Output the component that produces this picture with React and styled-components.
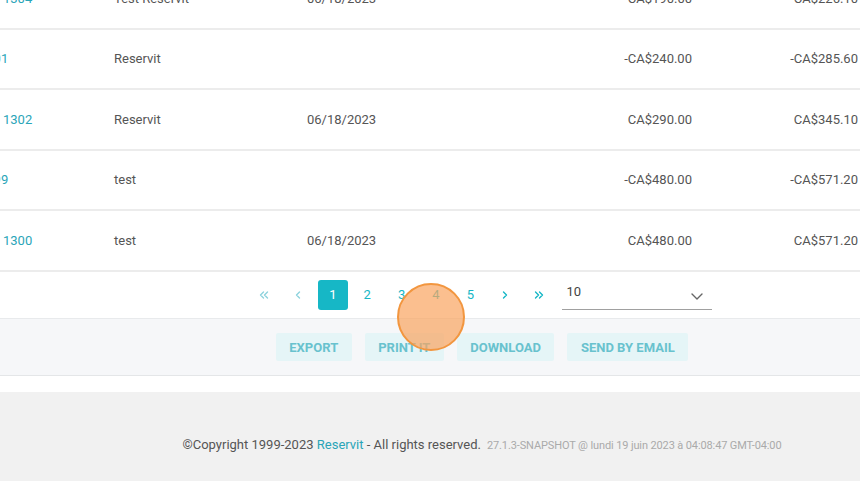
import React from "react";
import styled, { createGlobalStyle } from "styled-components";

const colors = {
  text: "#555555",
  link: "#2aa5b8",
  primary: "#16b7c6",
  border: "#ececec",
  barBg: "#f6f7f9",
  footerBg: "#f1f1f1",
};

const GlobalStyle = createGlobalStyle`
  html, body {
    margin: 0;
    padding: 0;
    overflow: hidden;
    background: #ffffff;
  }
  body {
    font-family: Roboto, "Liberation Sans", Arial, sans-serif;
    color: ${colors.text};
  }
`;

const rows = [
  { id: "1304", name: "Test Reservit", date: "06/18/2023", ht: "CA$190.00", ttc: "CA$226.10" },
  { id: "1301", name: "Reservit", date: "", ht: "-CA$240.00", ttc: "-CA$285.60", credit: true },
  { id: "1302", name: "Reservit", date: "06/18/2023", ht: "CA$290.00", ttc: "CA$345.10" },
  { id: "1299", name: "test", date: "", ht: "-CA$480.00", ttc: "-CA$571.20", credit: true },
  { id: "1300", name: "test", date: "06/18/2023", ht: "CA$480.00", ttc: "CA$571.20" },
];

const pages = [1, 2, 3, 4, 5];

const Chevron = ({ double, left }) => (
  <svg width="12" height="12" viewBox="0 0 12 12" fill="none" stroke="currentColor" strokeWidth="1.4" strokeLinecap="round" strokeLinejoin="round">
    {left ? (
      double ? (
        <>
          <path d="M5.5 3 L2.5 6 L5.5 9" />
          <path d="M9.5 3 L6.5 6 L9.5 9" />
        </>
      ) : (
        <path d="M7.5 3 L4.5 6 L7.5 9" />
      )
    ) : double ? (
      <>
        <path d="M2.5 3 L5.5 6 L2.5 9" />
        <path d="M6.5 3 L9.5 6 L6.5 9" />
      </>
    ) : (
      <path d="M4.5 3 L7.5 6 L4.5 9" />
    )}
  </svg>
);

export default function App() {
  return (
    <>
      <GlobalStyle />
      <Screen>
        <Page>
          <Table>
            {rows.map((r) => (
              <Row key={r.id}>
                <Cell />
                <Cell>
                  <IdLink $credit={r.credit}>{r.id}</IdLink>
                </Cell>
                <Cell>{r.name}</Cell>
                <Cell>{r.date}</Cell>
                <Cell $right>{r.ht}</Cell>
                <Cell $right>{r.ttc}</Cell>
                <Cell />
              </Row>
            ))}
          </Table>

          <Pagination>
            <PageItem $muted>
              <Chevron double left />
            </PageItem>
            <PageItem $muted>
              <Chevron left />
            </PageItem>
            {pages.map((p) => (
              <PageItem key={p} $active={p === 1}>
                {p}
              </PageItem>
            ))}
            <PageItem>
              <Chevron />
            </PageItem>
            <PageItem>
              <Chevron double />
            </PageItem>
            <SizeSelect>
              <span>10</span>
              <svg width="14" height="14" viewBox="0 0 14 14" fill="none" stroke="#666" strokeWidth="1.4" strokeLinecap="round" strokeLinejoin="round">
                <path d="M2 5 L7 10 L12 5" />
              </svg>
            </SizeSelect>
          </Pagination>

          <ActionBar>
            <ActionButton>Export</ActionButton>
            <ActionButton>Print it</ActionButton>
            <ActionButton>Download</ActionButton>
            <ActionButton>Send by email</ActionButton>
          </ActionBar>

          <Spacer />

          <Footer>
            <span>©Copyright 1999-2023 </span>
            <FooterLink>Reservit</FooterLink>
            <span> - All rights reserved.</span>
            <Version>27.1.3-SNAPSHOT @ lundi 19 juin 2023 à 04:08:47 GMT-04:00</Version>
          </Footer>
        </Page>
        <ClickMark />
      </Screen>
    </>
  );
}

const Screen = styled.div`
  position: relative;
  width: 860px;
  height: 481px;
  overflow: hidden;
`;

const Page = styled.div`
  width: 1044px;
  margin: -31px 0 0 -40px;
  display: flex;
  flex-direction: column;
`;

const Table = styled.div`
  display: flex;
  flex-direction: column;
`;

const Row = styled.div`
  display: grid;
  grid-template-columns: 43px 111px 193px 205px 180px 166px 146px;
  align-items: center;
  height: 60.5px;
  box-sizing: border-box;
  border-bottom: 2px solid ${colors.border};
  font-size: 13px;
`;

const Cell = styled.div`
  text-align: ${({ $right }) => ($right ? "right" : "left")};
  white-space: nowrap;
  color: ${colors.text};
`;

const IdLink = styled.a`
  display: inline-block;
  color: ${colors.link};
  margin-left: ${({ $credit }) => ($credit ? "-24px" : "0")};
  cursor: pointer;
`;

const Pagination = styled.div`
  display: flex;
  align-items: center;
  gap: 4.4px;
  height: 47.5px;
  padding-left: 289px;
  box-sizing: border-box;
  border-bottom: 1px solid #e8eaec;
`;

const PageItem = styled.div`
  width: 30px;
  height: 30px;
  display: flex;
  align-items: center;
  justify-content: center;
  border-radius: 3px;
  font-size: 13px;
  cursor: pointer;
  background: ${({ $active }) => ($active ? colors.primary : "transparent")};
  color: ${({ $active, $muted }) =>
    $active ? "#ffffff" : $muted ? "#8ed3dd" : colors.primary};
`;

const SizeSelect = styled.div`
  width: 150px;
  height: 30px;
  margin-left: 3px;
  box-sizing: border-box;
  display: flex;
  align-items: center;
  justify-content: space-between;
  padding: 0 8px 0 5px;
  border-bottom: 1px solid #a0a0a0;
  font-size: 13px;
  color: #444;
  margin-top: 1px;

  span {
    margin-top: -6px;
  }

  svg {
    margin-top: 2px;
  }
`;

const ActionBar = styled.div`
  display: flex;
  justify-content: center;
  align-items: center;
  gap: 13px;
  height: 56px;
  background: ${colors.barBg};
  border-bottom: 1px solid #e4e6e8;
`;

const ActionButton = styled.button`
  height: 28px;
  padding: 0 13.5px;
  border: none;
  border-radius: 2px;
  background: #e5f5f7;
  color: #68c2ce;
  font-family: Roboto, "Liberation Sans", Arial, sans-serif;
  font-size: 13px;
  font-weight: 700;
  text-transform: uppercase;
  cursor: pointer;
`;

const Spacer = styled.div`
  height: 16px;
  background: #ffffff;
`;

const Footer = styled.div`
  display: flex;
  justify-content: center;
  align-items: baseline;
  white-space: pre;
  height: 100px;
  padding-top: 45px;
  box-sizing: border-box;
  background: ${colors.footerBg};
  font-size: 13px;
  color: ${colors.text};
`;

const FooterLink = styled.a`
  color: ${colors.link};
  cursor: pointer;
`;

const Version = styled.span`
  margin-left: 6px;
  font-size: 11px;
  letter-spacing: -0.12px;
  color: #aaaaaa;
`;

const ClickMark = styled.div`
  position: absolute;
  left: 397px;
  top: 283px;
  width: 64px;
  height: 64px;
  border-radius: 50%;
  border: 2px solid #f2963f;
  background: rgba(249, 164, 96, 0.7);
  pointer-events: none;
`;
